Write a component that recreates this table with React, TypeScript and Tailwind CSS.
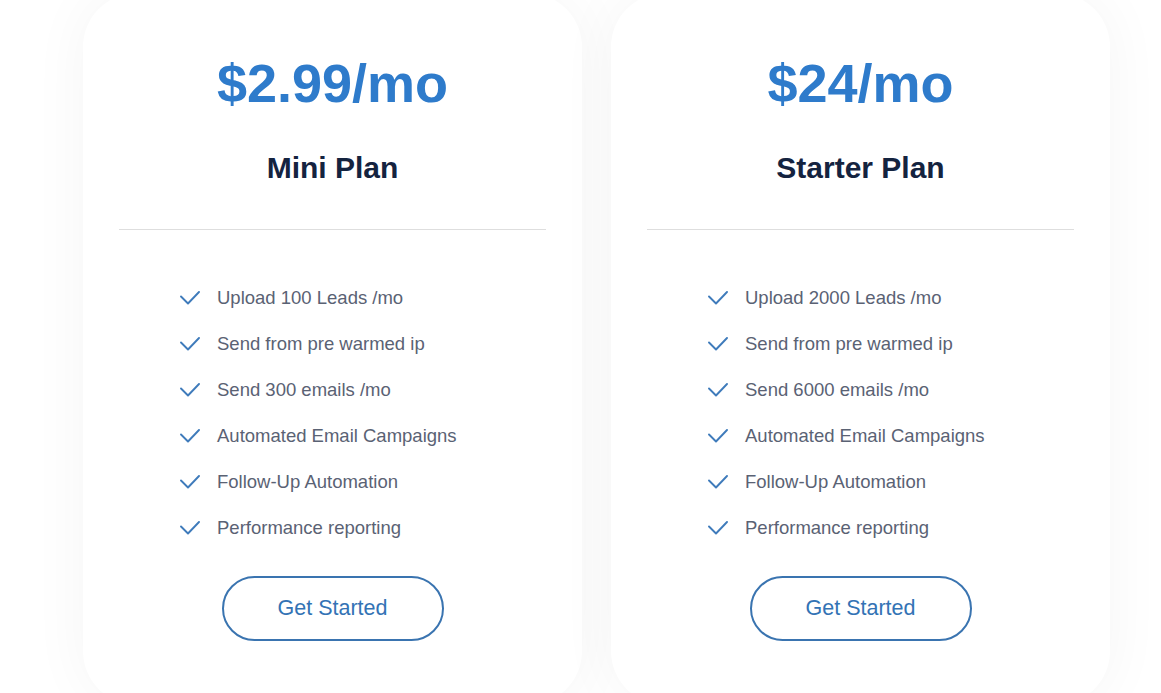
import React from "react";

type Plan = {
  price: string;
  name: string;
  features: string[];
};

const plans: Plan[] = [
  {
    price: "$2.99/mo",
    name: "Mini Plan",
    features: [
      "Upload 100 Leads /mo",
      "Send from pre warmed ip",
      "Send 300 emails /mo",
      "Automated Email Campaigns",
      "Follow-Up Automation",
      "Performance reporting",
    ],
  },
  {
    price: "$24/mo",
    name: "Starter Plan",
    features: [
      "Upload 2000 Leads /mo",
      "Send from pre warmed ip",
      "Send 6000 emails /mo",
      "Automated Email Campaigns",
      "Follow-Up Automation",
      "Performance reporting",
    ],
  },
];

const CheckMark = () => (
  <svg width="20" height="14" viewBox="0 0 20 14" fill="none" className="shrink-0">
    <path
      d="M1 5.5 L8 12.5 L19 1"
      stroke="#3f7bbb"
      strokeWidth="1.9"
      strokeLinecap="round"
      strokeLinejoin="round"
    />
  </svg>
);

const PlanCard = ({ plan }: { plan: Plan }) => {
  return (
    <div className="w-[499px] h-[712px] shrink-0 bg-white rounded-[54px] shadow-[0_0_60px_rgba(0,0,0,0.045)] pt-[63px] flex flex-col">
      {/* Price + name */}
      <h2 className="text-center text-[54px] leading-none font-bold text-[#2e7bcb]">{plan.price}</h2>
      <h3 className="mt-[43px] text-center text-[30px] leading-none font-bold text-[#14233f]">{plan.name}</h3>

      <div className="mt-[46px] mx-[36px] h-px bg-[#dedede]" />

      {/* Features */}
      <ul className="mt-[54px] pl-[97px] flex flex-col gap-[18px]">
        {plan.features.map((f) => (
          <li key={f} className="flex items-center gap-[17px] h-[28px]">
            <CheckMark />
            <span className="text-[18.5px] text-[#5a6274]">{f}</span>
          </li>
        ))}
      </ul>

      <div className="mt-[34px] flex justify-center">
        <button className="w-[222px] h-[65px] rounded-full border-2 border-[#3a74b0] text-[21.5px] text-[#3373b5] bg-white">
          Get Started
        </button>
      </div>
    </div>
  );
};

export default function App() {
  return (
    <div
      className="w-full h-[693px] overflow-hidden bg-white"
      style={{ fontFamily: '"Liberation Sans", Arial, sans-serif' }}
    >
      <div className="-mt-[7px] pl-[83px] flex gap-[29px]">
        {plans.map((p) => (
          <PlanCard key={p.name} plan={p} />
        ))}
      </div>
    </div>
  );
}
